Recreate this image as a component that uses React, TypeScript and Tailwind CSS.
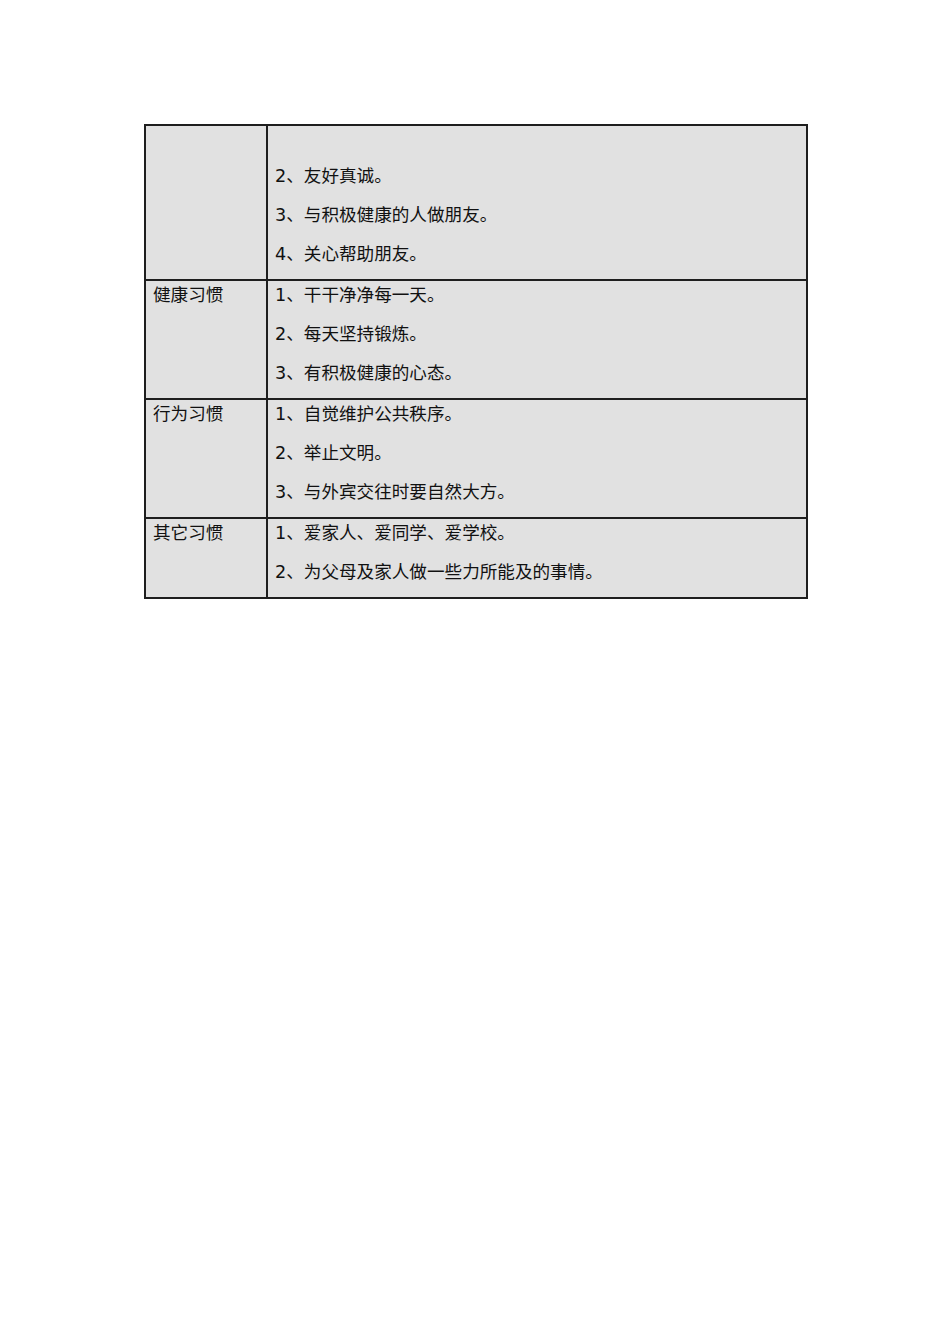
const rows: { label: string; items: string[]; lead?: boolean }[] = [
  { label: "", items: ["2、友好真诚。", "3、与积极健康的人做朋友。", "4、关心帮助朋友。"], lead: true },
  { label: "健康习惯", items: ["1、干干净净每一天。", "2、每天坚持锻炼。", "3、有积极健康的心态。"] },
  { label: "行为习惯", items: ["1、自觉维护公共秩序。", "2、举止文明。", "3、与外宾交往时要自然大方。"] },
  { label: "其它习惯", items: ["1、爱家人、爱同学、爱学校。", "2、为父母及家人做一些力所能及的事情。"] },
];

export default function App() {
  return (
    <div
      className="min-h-[1344px] w-[950px] bg-white pl-[144px] pt-[124px] text-[17.6px] text-[#111]"
      style={{ fontFamily: '"DejaVu Sans", "Noto Sans CJK SC", sans-serif' }}
    >
      <div className="w-[664px] border-2 border-[#1e1e1e] bg-[#e1e1e1]">
        {rows.map((row, i) => (
          <div key={i} className={i ? "flex border-t-2 border-[#1e1e1e]" : "flex"}>
            <div className="w-[122px] shrink-0 border-r-2 border-[#1e1e1e] pl-[7px]">
              <p className="pt-[2px] leading-[24px]">{row.label}</p>
            </div>
            <div className="flex-1 pl-[7px]">
              {row.lead && <div className="h-[36px]" />}
              {row.items.map((t) => (
                <p key={t} className="mb-[13px] pt-[2px] leading-[24px]">
                  {t}
                </p>
              ))}
            </div>
          </div>
        ))}
      </div>
    </div>
  );
}
